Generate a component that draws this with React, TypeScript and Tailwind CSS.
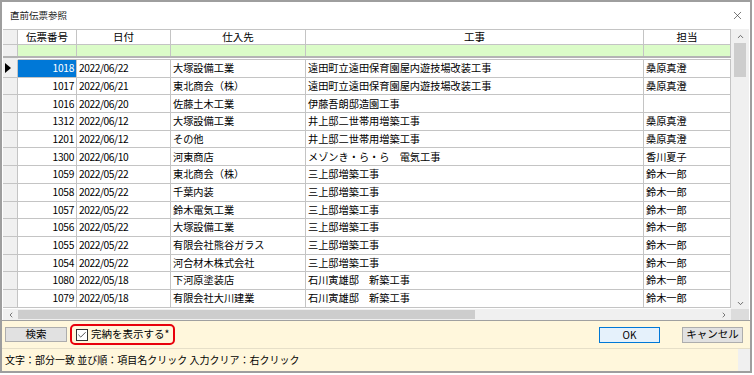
import { Check, ChevronUp, ChevronDown, ChevronLeft, ChevronRight, X } from "lucide-react";

const rows = [
  ["1018", "2022/06/22", "大塚設備工業", "遠田町立遠田保育園屋内遊技場改装工事", "桑原真澄"],
  ["1017", "2022/06/21", "東北商会（株）", "遠田町立遠田保育園屋内遊技場改装工事", "桑原真澄"],
  ["1016", "2022/06/20", "佐藤土木工業", "伊藤吾朗邸造園工事", ""],
  ["1312", "2022/06/12", "大塚設備工業", "井上邸二世帯用増築工事", "桑原真澄"],
  ["1201", "2022/06/12", "その他", "井上邸二世帯用増築工事", "桑原真澄"],
  ["1300", "2022/06/10", "河東商店", "メゾンき・ら・ら　電気工事", "香川夏子"],
  ["1059", "2022/05/22", "東北商会（株）", "三上邸増築工事", "鈴木一郎"],
  ["1058", "2022/05/22", "千葉内装", "三上邸増築工事", "鈴木一郎"],
  ["1057", "2022/05/22", "鈴木電気工業", "三上邸増築工事", "鈴木一郎"],
  ["1056", "2022/05/22", "大塚設備工業", "三上邸増築工事", "鈴木一郎"],
  ["1055", "2022/05/22", "有限会社熊谷ガラス", "三上邸増築工事", "鈴木一郎"],
  ["1054", "2022/05/22", "河合材木株式会社", "三上邸増築工事", "鈴木一郎"],
  ["1080", "2022/05/18", "下河原塗装店", "石川寅雄邸　新築工事", "鈴木一郎"],
  ["1079", "2022/05/18", "有限会社大川建業", "石川寅雄邸　新築工事", "鈴木一郎"],
];

const cell = "border-r border-b border-[#c4c4c4] px-[2px] truncate";

export default function App() {
  return (
    <div className="w-[754px] h-[375px] bg-white text-[10.5px] text-black font-['Noto_Sans_CJK_JP','Noto_Sans',sans-serif] leading-none">
      <div className="w-[752px] h-[373px] border-2 border-[#9e9e9e] flex flex-col bg-white">
        {/* title bar */}
        <div className="h-[27px] flex items-center justify-between pl-[8px] pr-[6px] shrink-0">
          <span className="text-[9.5px] text-[#222]">直前伝票参照</span>
          <X className="w-[13px] h-[13px] text-[#333]" strokeWidth={1.2} />
        </div>

        {/* grid */}
        <div className="flex pl-[1px] h-[280px] shrink-0">
          <div className="w-[728px] flex flex-col">
            {/* header */}
            <div className="flex h-[16px] border-t border-[#c4c4c4]">
              <div className="w-[15px] bg-[#f0f0f0] border-r border-b border-[#c4c4c4]" />
              <div className="w-[59px] border-r border-b border-[#c4c4c4] flex items-center justify-center">伝票番号</div>
              <div className="w-[94px] border-r border-b border-[#c4c4c4] flex items-center justify-center">日付</div>
              <div className="w-[135px] border-r border-b border-[#c4c4c4] flex items-center justify-center">仕入先</div>
              <div className="w-[338px] border-r border-b border-[#c4c4c4] flex items-center justify-center">工事</div>
              <div className="w-[87px] border-r border-b border-[#c4c4c4] flex items-center justify-center">担当</div>
            </div>
            {/* filter row */}
            <div className="flex h-[13px] border-b-2 border-[#b4b4b4]">
              <div className="w-[15px] bg-[#f0f0f0] border-r border-[#c4c4c4]" />
              <div className="w-[59px] bg-[#dbfcc8] border-r border-[#c4c4c4]" />
              <div className="w-[94px] bg-[#dbfcc8] border-r border-[#c4c4c4]" />
              <div className="w-[135px] bg-[#dbfcc8] border-r border-[#c4c4c4]" />
              <div className="w-[338px] bg-[#dbfcc8] border-r border-[#c4c4c4]" />
              <div className="w-[87px] bg-[#dbfcc8] border-r border-[#c4c4c4]" />
            </div>
            <div className="h-[2px] flex">
              <div className="w-[15px] bg-[#f0f0f0]" />
              <div className="flex-1 border-b border-[#c4c4c4]" />
            </div>
            {/* data rows */}
            {rows.map((r, i) => (
              <div key={r[0] + i} className="flex h-[17.7px] text-[10.2px]">
                <div className="w-[15px] bg-[#f0f0f0] border-r border-b border-[#c4c4c4] flex items-center pl-[2px]">
                  {i === 0 && (
                    <svg width="6" height="10" viewBox="0 0 6 10">
                      <path d="M0 0 L6 5 L0 10 Z" fill="#000" />
                    </svg>
                  )}
                </div>
                <div className={`w-[59px] ${cell} flex items-center justify-end tracking-[-0.3px] ${i === 0 ? "bg-[#0078d7] text-white" : ""}`}>{r[0]}</div>
                <div className={`w-[94px] ${cell} flex items-center tracking-[-0.4px]`}>{r[1]}</div>
                <div className={`w-[135px] ${cell} flex items-center`}>{r[2]}</div>
                <div className={`w-[338px] ${cell} flex items-center`}>{r[3]}</div>
                <div className={`w-[87px] ${cell} flex items-center`}>{r[4]}</div>
              </div>
            ))}
          </div>
          {/* vertical scrollbar */}
          <div className="w-[18px] bg-[#f0f0f0] flex flex-col items-center">
            <div className="h-[14px] flex items-center justify-center">
              <ChevronUp className="w-[9px] h-[9px] text-[#606060]" strokeWidth={2.5} />
            </div>
            <div className="w-[12px] h-[34px] bg-[#cdcdcd]" />
            <div className="flex-1" />
            <div className="h-[12px] flex items-center justify-center">
              <ChevronDown className="w-[9px] h-[9px] text-[#606060]" strokeWidth={2.5} />
            </div>
          </div>
        </div>

        {/* horizontal scrollbar */}
        <div className="flex h-[11px] pl-[1px] shrink-0">
          <div className="w-[728px] bg-[#f0f0f0] flex items-center">
            <div className="w-[15px] flex items-center justify-center">
              <ChevronLeft className="w-[8px] h-[8px] text-[#606060]" strokeWidth={2.5} />
            </div>
            <div className="w-[457px] h-[9px] bg-[#cdcdcd]" />
            <div className="flex-1" />
            <div className="w-[14px] flex items-center justify-center">
              <ChevronRight className="w-[8px] h-[8px] text-[#606060]" strokeWidth={2.5} />
            </div>
          </div>
          <div className="w-[18px] bg-[#dcdcdc]" />
        </div>

        {/* buttons panel */}
        <div className="h-[28px] shrink-0 bg-[#fff7dc] border-t border-[#a0a0a0] flex items-center pl-[3px] pr-[7px]">
          <button className="w-[62px] h-[15px] bg-[#e1e1e1] border border-[#adadad] text-[10.5px] flex items-center justify-center">検索</button>
          <div className="ml-[3px] h-[21px] px-[4px] border-2 border-[#e8000b] rounded-[5px] flex items-center gap-[3px]">
            <div className="w-[12px] h-[12px] border border-[#333] bg-white flex items-center justify-center">
              <Check className="w-[10px] h-[10px] text-[#333]" strokeWidth={2} />
            </div>
            <span className="text-[10.5px]">完納を表示する*</span>
          </div>
          <div className="flex-1" />
          <button className="w-[61px] h-[16px] bg-[#e5f1fb] border border-[#0078d7] text-[10px] flex items-center justify-center">OK</button>
          <button className="ml-[22px] w-[61px] h-[16px] bg-[#e1e1e1] border border-[#adadad] text-[10.5px] flex items-center justify-center">キャンセル</button>
        </div>

        {/* status bar */}
        <div className="flex-1 flex border-t border-[#e6dfc8]">
          <div className="flex-1 bg-[#fff7dc] flex items-center pl-[3px] text-[10px]">
            文字：部分一致 並び順：項目名クリック 入力クリア：右クリック
          </div>
          <div className="w-[12px] bg-[#f0f0f0]" />
        </div>
      </div>
    </div>
  );
}
